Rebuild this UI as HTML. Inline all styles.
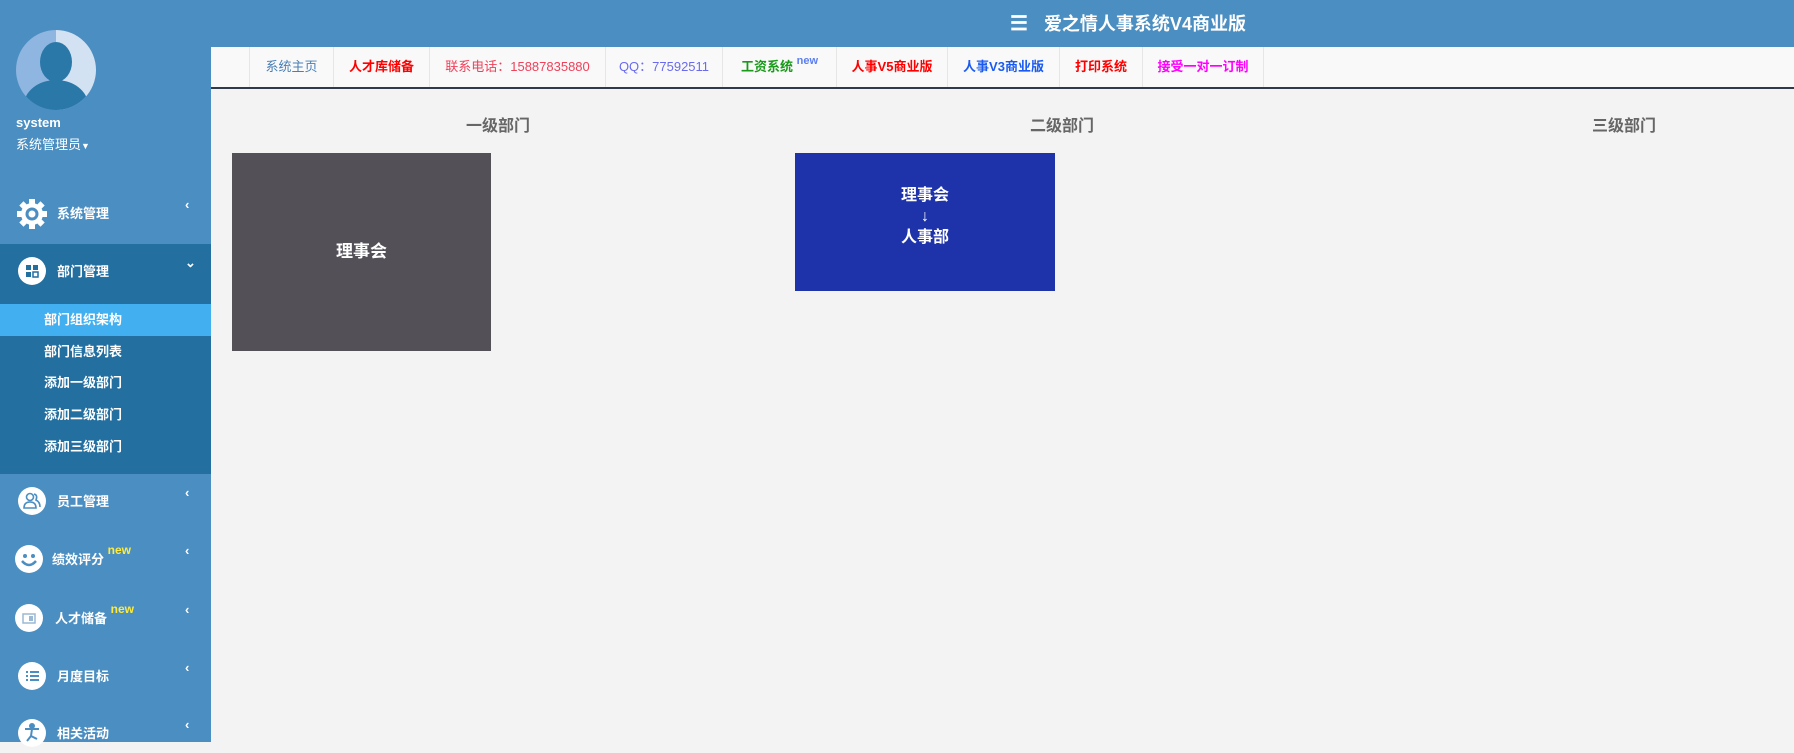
<!DOCTYPE html>
<html><head><meta charset="utf-8"><style>
*{margin:0;padding:0;box-sizing:border-box}
body{width:1794px;height:742px;overflow:hidden;background:#f3f3f3;font-family:"Liberation Sans","Noto Sans CJK SC",sans-serif;position:relative}
.hdr{position:absolute;left:0;top:0;width:1794px;height:47px;background:#4b8ec1}
.title{position:absolute;left:1010px;top:10px;color:#fff;font-size:18px;font-weight:bold;white-space:nowrap}
.side{position:absolute;left:0;top:0;width:211px;height:742px;background:#4b8ec1}
.tabs{position:absolute;left:211px;top:47px;width:1583px;height:42px;background:#f9f9f9;border-bottom:2px solid #2f3a4a}
.tab{position:absolute;top:0;height:40px;line-height:40px;font-size:13px;text-align:center;border-left:1px solid #e6e6e6;white-space:nowrap}
.sub{position:absolute;left:0;width:211px;height:32px;line-height:32px;padding-left:44px;color:#fff;font-size:13px;font-weight:bold}
.item{position:absolute;left:0;width:211px;height:40px;color:#fff;font-size:13px;font-weight:bold}
.item .ic{position:absolute;left:18px;top:6px;width:28px;height:28px;border-radius:50%;background:#fff}
.item .t{position:absolute;left:57px;top:10px;white-space:nowrap}
.item .ch{position:absolute;left:185px;top:4px;font-size:13px}
.new{color:#ffeb3b;font-size:12px;vertical-align:top;position:relative;top:-6px}
.h{position:absolute;top:112px;font-size:16px;font-weight:bold;color:#666;transform:translateX(-50%);white-space:nowrap}
.box{position:absolute;color:#fff;font-weight:bold;font-size:17px;text-align:center}
</style></head><body>
<div class="hdr"></div>
<div class="title"><span style="font-size:20px;margin-right:16px">&#9776;</span>爱之情人事系统V4商业版</div>
<div class="side">
 <div style="position:absolute;left:16px;top:30px;width:80px;height:80px;border-radius:50%;background:linear-gradient(90deg,#8fb6e0 50%,#d3e2f3 50%);overflow:hidden">
  <div style="position:absolute;left:24px;top:12px;width:32px;height:40px;border-radius:50%;background:#2a78a8"></div>
  <div style="position:absolute;left:8px;top:50px;width:64px;height:50px;border-radius:50% 50% 0 0;background:#2a78a8"></div>
 </div>
 <div style="position:absolute;left:16px;top:115px;color:#fff;font-size:13px;font-weight:bold">system</div>
 <div style="position:absolute;left:16px;top:134px;color:#fff;font-size:13px">系统管理员<span style="font-size:9px">▼</span></div>
 <div class="item" style="top:193px"><svg style="position:absolute;left:16px;top:5px" width="32" height="32" viewBox="0 0 32 32"><g fill="#fff"><circle cx="16" cy="16" r="11"/><g transform="translate(16 16)"><rect x="-3" y="-15" width="6" height="30"/><rect x="-3" y="-15" width="6" height="30" transform="rotate(45)"/><rect x="-3" y="-15" width="6" height="30" transform="rotate(90)"/><rect x="-3" y="-15" width="6" height="30" transform="rotate(135)"/></g></g><circle cx="16" cy="16" r="6.5" fill="#4b8ec1"/><circle cx="16" cy="16" r="3.5" fill="#fff"/></svg><span class="t">系统管理</span><span class="ch">‹</span></div>
 <div style="position:absolute;left:0;top:244px;width:211px;height:230px;background:#226fa0"></div>
 <div class="item" style="top:251px"><div class="ic"><svg width="28" height="28"><rect x="8" y="8" width="5" height="5" fill="#226fa0"/><rect x="15" y="8" width="5" height="5" fill="#226fa0"/><rect x="8" y="15" width="5" height="5" fill="#226fa0"/><rect x="15" y="15" width="5" height="5" fill="none" stroke="#226fa0" stroke-width="1.5"/></svg></div><span class="t">部门管理</span><span class="ch">⌄</span></div>
 <div class="sub" style="top:304px;background:#42b0f0">部门组织架构</div>
 <div class="sub" style="top:336px">部门信息列表</div>
 <div class="sub" style="top:367px">添加一级部门</div>
 <div class="sub" style="top:399px">添加二级部门</div>
 <div class="sub" style="top:431px">添加三级部门</div>
 <div class="item" style="top:481px"><div class="ic"><svg width="28" height="28" fill="none" stroke="#4b8ec1" stroke-width="1.6"><circle cx="12" cy="10" r="3.5"/><path d="M6 21 Q6 15 12 15 Q18 15 18 21Z"/><path d="M16 7 Q20 8 18 13 Q22 15 22 20"/></svg></div><span class="t">员工管理</span><span class="ch">‹</span></div>
 <div class="item" style="top:539px"><div class="ic" style="left:15px">
 <svg width="28" height="28"><circle cx="10" cy="11" r="2" fill="#4b8ec1"/><circle cx="18" cy="11" r="2" fill="#4b8ec1"/><path d="M7 16 Q14 24 21 16" stroke="#4b8ec1" stroke-width="2.5" fill="none"/></svg></div><span class="t" style="left:52px">绩效评分 <span class="new">new</span></span><span class="ch">‹</span></div>
 <div class="item" style="top:598px"><div class="ic" style="left:15px"><svg width="28" height="28"><rect x="8" y="10" width="12" height="9" fill="none" stroke="#9bb8d4" stroke-width="1.5"/><rect x="14" y="12" width="4" height="5" fill="#9bb8d4"/></svg></div><span class="t" style="left:55px">人才储备 <span class="new">new</span></span><span class="ch">‹</span></div>
 <div class="item" style="top:656px"><div class="ic"><svg width="28" height="28"><g fill="#4b8ec1"><rect x="8" y="9" width="2" height="2"/><rect x="12" y="9" width="9" height="2"/><rect x="8" y="13" width="2" height="2"/><rect x="12" y="13" width="9" height="2"/><rect x="8" y="17" width="2" height="2"/><rect x="12" y="17" width="9" height="2"/></g></svg></div><span class="t">月度目标</span><span class="ch">‹</span></div>
 <div class="item" style="top:713px"><div class="ic"><svg width="28" height="28" stroke="#4b8ec1" stroke-width="2" fill="none"><circle cx="14" cy="7" r="2" fill="#4b8ec1"/><path d="M7 10 L21 10 M14 10 L13 17 L9 22 M13 17 L19 20"/></svg></div><span class="t">相关活动</span><span class="ch">‹</span></div>
</div>
<div class="tabs">
 <div class="tab" style="left:38px;width:84px;color:#4a7fb5">系统主页</div>
 <div class="tab" style="left:122px;width:96px;color:#f00;font-weight:bold">人才库储备</div>
 <div class="tab" style="left:218px;width:176px;color:#f0405a">联系电话：15887835880</div>
 <div class="tab" style="left:394px;width:117px;color:#6a6af0">QQ：77592511</div>
 <div class="tab" style="left:511px;width:114px;color:#1a9a1a;font-weight:bold">工资系统 <span style="color:#5b7ff0;font-size:11px;vertical-align:top;position:relative;top:-6px">new</span></div>
 <div class="tab" style="left:625px;width:111px;color:#f00;font-weight:bold">人事V5商业版</div>
 <div class="tab" style="left:736px;width:112px;color:#1a5af0;font-weight:bold">人事V3商业版</div>
 <div class="tab" style="left:848px;width:83px;color:#f00;font-weight:bold">打印系统</div>
 <div class="tab" style="left:931px;width:122px;color:#f0f;font-weight:bold;border-right:1px solid #e6e6e6">接受一对一订制</div>
</div>
<div class="h" style="left:498px">一级部门</div>
<div class="h" style="left:1062px">二级部门</div>
<div class="h" style="left:1624px">三级部门</div>
<div class="box" style="left:232px;top:153px;width:259px;height:198px;background:#535057;line-height:198px">理事会</div>
<div class="box" style="left:795px;top:153px;width:260px;height:138px;background:#1e32a9;padding-top:32px;line-height:21px;font-size:16px">理事会<br>↓<br>人事部</div>
</body></html>
